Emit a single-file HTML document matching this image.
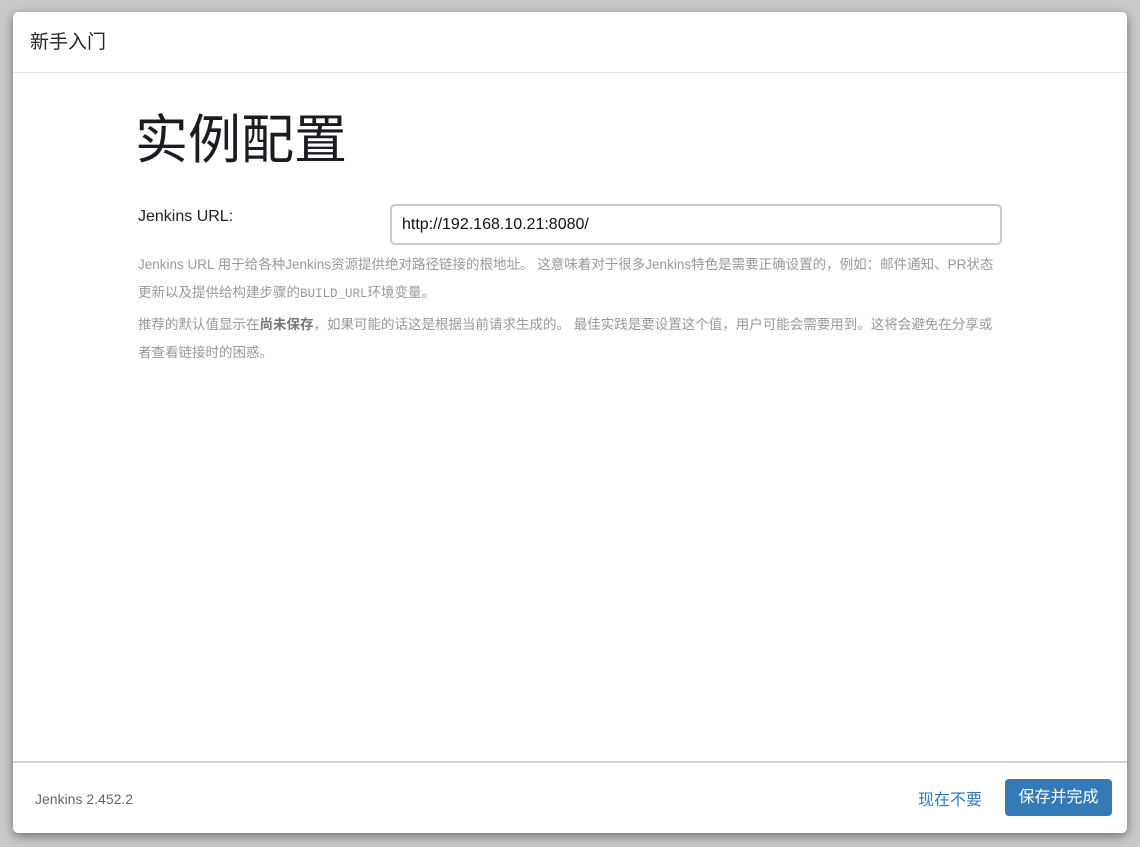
<!DOCTYPE html>
<html><head><meta charset="utf-8">
<style>
*{box-sizing:border-box;margin:0;padding:0}
body{width:1140px;height:847px;background:#c9c9c9;font-family:"Liberation Sans","Noto Sans CJK SC",sans-serif;position:relative;overflow:hidden}
.dlg{position:absolute;left:13px;top:12px;width:1114px;height:821px;background:#fff;border-radius:5px;box-shadow:0 3px 10px rgba(0,0,0,.45)}
.hd{height:61px;border-bottom:1px solid #e5e5e5;padding:0 17px;font-size:19px;line-height:62px;color:#222}
h1{position:absolute;left:122px;top:99px;font-size:53px;font-weight:normal;color:#1b1b22;line-height:60px}
.lbl{position:absolute;left:125px;top:196px;font-size:16px;color:#222}
.inp{position:absolute;left:377px;top:192px;width:612px;height:41px;border:2px solid #c3ccd2;border-radius:5px;font-size:16px;line-height:37px;padding-left:10px;color:#111}
.help{position:absolute;left:125px;top:239px;width:900px;font-size:13.5px;line-height:28px;color:#999;white-space:nowrap}
.help p{margin:0 0 3px}
.help b{color:#777}
.help .m{font-family:"Liberation Mono","Noto Sans CJK SC",monospace;font-size:12.5px}
.ft{position:absolute;left:0;right:0;top:749px;height:72px;border-top:2px solid #d4d4d4}
.ver{position:absolute;left:22px;top:28px;font-size:14px;color:#666}
.skip{position:absolute;left:905px;top:23px;font-size:16px;color:#337ab7}
.btn{position:absolute;left:992px;top:16px;width:107px;height:37px;background:#337ab7;border-radius:4px;color:#fff;font-size:16px;line-height:37px;text-align:center}
</style></head><body>
<div class="dlg">
<div class="hd">新手入门</div>
<h1>实例配置</h1>
<div class="lbl">Jenkins URL:</div>
<div class="inp">http://192.168.10.21:8080/</div>
<div class="help">
<p>Jenkins URL 用于给各种Jenkins资源提供绝对路径链接的根地址。 这意味着对于很多Jenkins特色是需要正确设置的，例如：邮件通知、PR状态<br>更新以及提供给构建步骤的<span class="m">BUILD_URL</span>环境变量。</p>
<p>推荐的默认值显示在<b>尚未保存</b>，如果可能的话这是根据当前请求生成的。 最佳实践是要设置这个值，用户可能会需要用到。这将会避免在分享或<br>者查看链接时的困惑。</p>
</div>
<div class="ft">
<div class="ver">Jenkins 2.452.2</div>
<div class="skip">现在不要</div>
<div class="btn">保存并完成</div>
</div>
</div>
</body></html>
